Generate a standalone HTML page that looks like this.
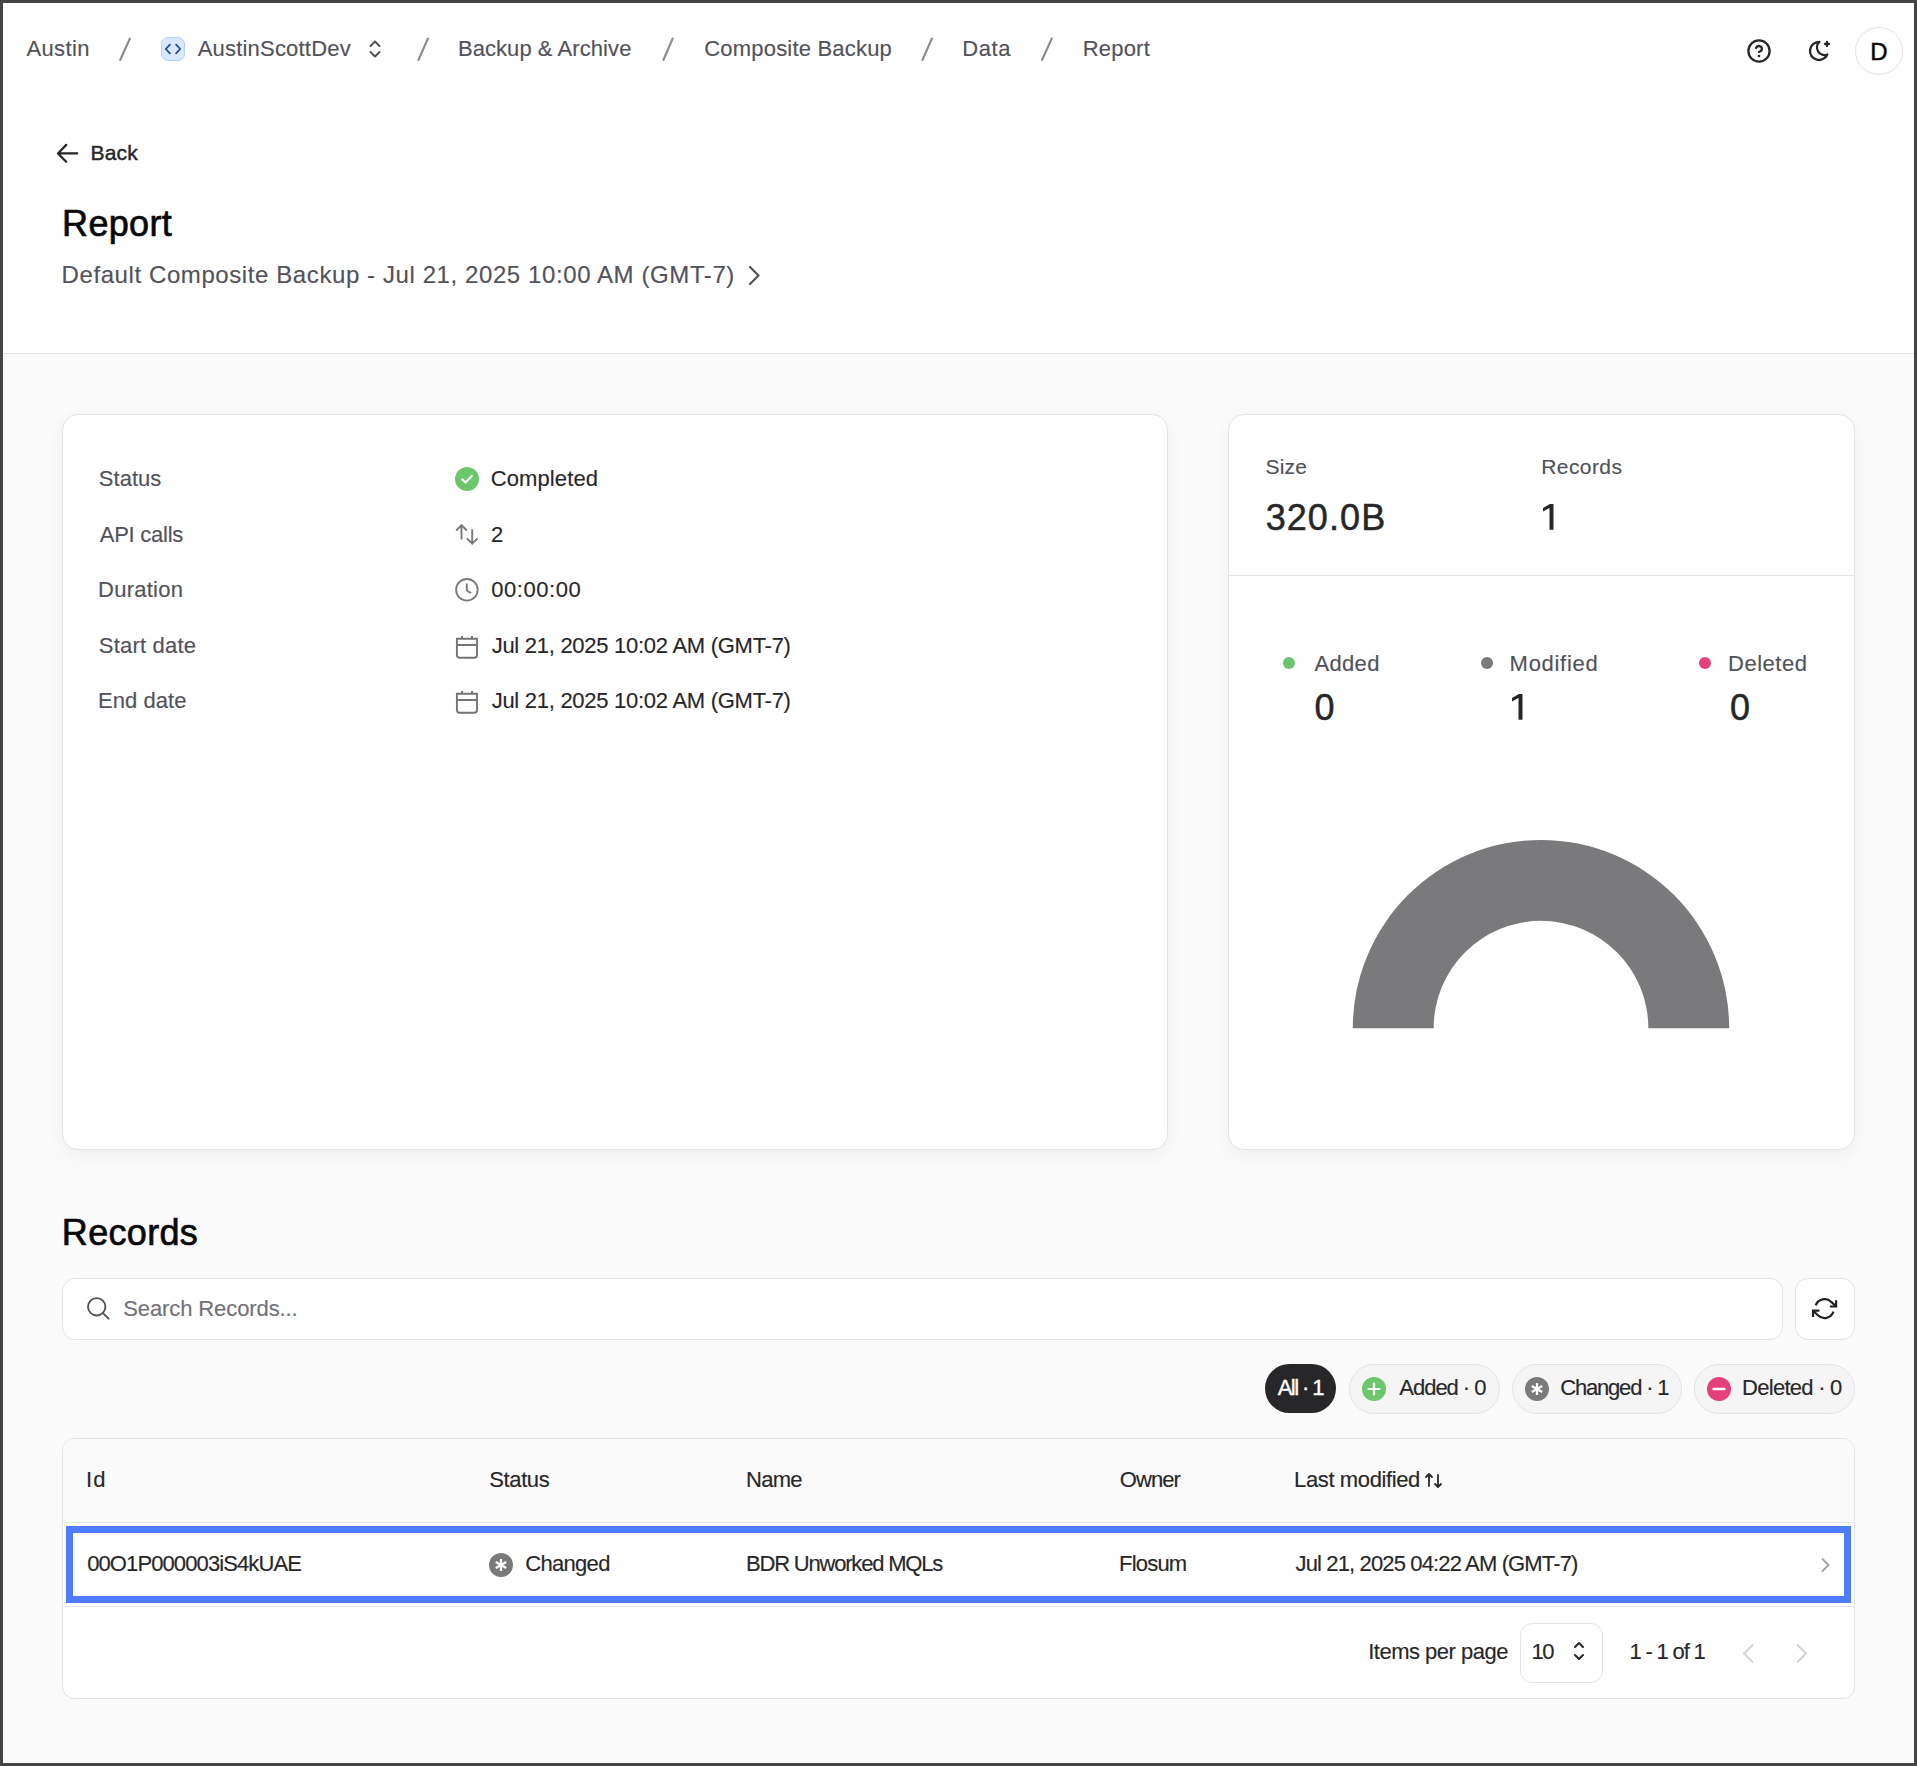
<!DOCTYPE html>
<html><head><meta charset="utf-8">
<style>
*{box-sizing:border-box;margin:0;padding:0}
html,body{width:1917px;height:1766px;overflow:hidden}
body{font-family:"Liberation Sans",sans-serif;position:relative;background:#444}
#frame{position:absolute;left:3px;top:3px;width:1911px;height:1760px;background:#fafafa}
.t{position:absolute;white-space:nowrap;line-height:1;font-size:22px}
.card{position:absolute;background:#fff;border:1px solid #e4e4e7;border-radius:16px;box-shadow:0 6px 20px rgba(0,0,0,.045)}
svg{position:absolute;overflow:visible}
</style></head><body>
<div id="frame"></div>
<div style="position:absolute;left:1913px;top:3px;width:1px;height:1760px;background:#fff"></div>
<div style="position:absolute;left:3px;top:1762px;width:1911px;height:1px;background:#fff"></div>
<div style="position:absolute;left:3px;top:3px;width:1911px;height:351px;background:#fff;border-bottom:1px solid #e4e4e7"></div>
<div class="t" style="left:26.46px;top:38px;font-size:22px;color:#52525b;letter-spacing:0.365px;-webkit-text-stroke:0.15px #52525b;">Austin</div>
<svg style="left:0;top:0" width="1917" height="100"><line x1="120.2" y1="60" x2="129.9" y2="38.5" stroke="#8b8b8f" stroke-width="2.1" stroke-linecap="round"/></svg>
<div style="position:absolute;left:161px;top:37px;width:24px;height:24px;border-radius:7px;background:#d9e8ff;border:1px solid #b0d0ff"></div>
<svg style="left:161px;top:37px" width="24" height="24"><path d="M8.9 7.6 L4.8 12 L8.9 16.4 M15.1 7.6 L19.2 12 L15.1 16.4" fill="none" stroke="#1f4e9c" stroke-width="1.8" stroke-linecap="round" stroke-linejoin="round"/></svg>
<div class="t" style="left:197.66px;top:38px;font-size:22px;color:#52525b;letter-spacing:0.201px;-webkit-text-stroke:0.15px #52525b;">AustinScottDev</div>
<svg style="left:364px;top:37px" width="22" height="24"><path d="M6.5 9 L11 4.5 L15.5 9 M6.5 15 L11 19.5 L15.5 15" fill="none" stroke="#52525b" stroke-width="2" stroke-linecap="round" stroke-linejoin="round"/></svg>
<svg style="left:0;top:0" width="1917" height="100"><line x1="418.4" y1="60" x2="428" y2="38.5" stroke="#8b8b8f" stroke-width="2.1" stroke-linecap="round"/></svg>
<div class="t" style="left:457.90px;top:38px;font-size:22px;color:#52525b;letter-spacing:0.070px;-webkit-text-stroke:0.15px #52525b;">Backup &amp; Archive</div>
<svg style="left:0;top:0" width="1917" height="100"><line x1="663.4" y1="60" x2="672.7" y2="38.5" stroke="#8b8b8f" stroke-width="2.1" stroke-linecap="round"/></svg>
<div class="t" style="left:704.28px;top:38px;font-size:22px;color:#52525b;letter-spacing:0.193px;-webkit-text-stroke:0.15px #52525b;">Composite Backup</div>
<svg style="left:0;top:0" width="1917" height="100"><line x1="922.4" y1="60" x2="932" y2="38.5" stroke="#8b8b8f" stroke-width="2.1" stroke-linecap="round"/></svg>
<div class="t" style="left:962.20px;top:38px;font-size:22px;color:#52525b;letter-spacing:0.611px;-webkit-text-stroke:0.15px #52525b;">Data</div>
<svg style="left:0;top:0" width="1917" height="100"><line x1="1042" y1="60" x2="1051.8" y2="38.5" stroke="#8b8b8f" stroke-width="2.1" stroke-linecap="round"/></svg>
<div class="t" style="left:1082.70px;top:38px;font-size:22px;color:#52525b;letter-spacing:0.207px;-webkit-text-stroke:0.15px #52525b;">Report</div>
<svg style="left:1747px;top:39px" width="24" height="24" fill="none" stroke="#27272a" stroke-width="2.3" stroke-linecap="round" stroke-linejoin="round"><circle cx="12" cy="12" r="10.6"/><path d="M9.09 9a3 3 0 0 1 5.83 1c0 2-3 3-3 3"/><path d="M12 17h.01" stroke-width="2.6"/></svg>
<svg style="left:1806.6px;top:39.1px" width="24" height="24" fill="none" stroke="#27272a" stroke-width="2.3" stroke-linecap="round" stroke-linejoin="round"><path d="M12 3c.132 0 .263 0 .393 0a7.5 7.5 0 0 0 7.92 12.446a9 9 0 1 1 -8.313 -12.454z"/><path d="M20 3v4M18 5h4"/></svg>
<div style="position:absolute;left:1855px;top:27px;width:48px;height:48px;border-radius:50%;border:1px solid #e4e4e7;background:#fff"></div>
<div class="t" style="left:1870.33px;top:39.5px;font-size:24px;color:#09090b;-webkit-text-stroke:0.5px #09090b;">D</div>
<svg style="left:54px;top:141px" width="28" height="24"><path d="M23.2 12.45 H4.5 M12.2 3.9 L4 12.45 L12.2 20.8" fill="none" stroke="#27272a" stroke-width="2.3" stroke-linecap="round" stroke-linejoin="round"/></svg>
<div class="t" style="left:90.48px;top:142px;font-size:21px;color:#27272a;letter-spacing:0.169px;-webkit-text-stroke:0.45px #27272a;">Back</div>
<div class="t" style="left:62.05px;top:206px;font-size:36px;color:#09090b;letter-spacing:0.333px;-webkit-text-stroke:0.7px #09090b;">Report</div>
<div class="t" style="left:61.53px;top:263px;font-size:24px;color:#52525b;letter-spacing:0.591px;-webkit-text-stroke:0.15px #52525b;">Default Composite Backup - Jul 21, 2025 10:00 AM (GMT-7)</div>
<svg style="left:742px;top:263px" width="24" height="24"><path d="M8 4 L16.5 12.5 L8 21" fill="none" stroke="#52525b" stroke-width="2.2" stroke-linecap="round" stroke-linejoin="round"/></svg>
<div class="card" style="left:62px;top:414px;width:1106px;height:736px"></div>
<div class="card" style="left:1228px;top:414px;width:627px;height:736px"></div>
<div style="position:absolute;left:1229px;top:575px;width:625px;height:1px;background:#e4e4e7"></div>
<div class="t" style="left:98.80px;top:468px;font-size:22px;color:#52525b;letter-spacing:0.025px;-webkit-text-stroke:0.15px #52525b;">Status</div>
<div class="t" style="left:99.76px;top:524px;font-size:22px;color:#52525b;letter-spacing:-0.256px;-webkit-text-stroke:0.15px #52525b;">API calls</div>
<div class="t" style="left:98.00px;top:579px;font-size:22px;color:#52525b;letter-spacing:0.254px;-webkit-text-stroke:0.15px #52525b;">Duration</div>
<div class="t" style="left:98.80px;top:635px;font-size:22px;color:#52525b;letter-spacing:0.198px;-webkit-text-stroke:0.15px #52525b;">Start date</div>
<div class="t" style="left:98.00px;top:690px;font-size:22px;color:#52525b;letter-spacing:0.058px;-webkit-text-stroke:0.15px #52525b;">End date</div>
<svg style="left:455px;top:467px" width="24" height="24"><circle cx="12" cy="12" r="12" fill="#6cc76c"/><path d="M7.2 12.4 L10.5 15.4 L16.8 9" fill="none" stroke="#fff" stroke-width="2.2" stroke-linecap="round" stroke-linejoin="round"/></svg>
<div class="t" style="left:490.78px;top:468px;font-size:22px;color:#27272a;letter-spacing:0.106px;-webkit-text-stroke:0.15px #27272a;">Completed</div>
<svg style="left:454px;top:522px" width="26" height="26"><path d="M7.5 17.5 V3.2 M2.2 8.5 L7.5 3.2 L12.8 8.5 M18.2 7.3 V21.6 M12.9 16.3 L18.2 21.6 L23.5 16.3" fill="none" stroke="#7a7a7a" stroke-width="1.9"/></svg>
<div class="t" style="left:490.89px;top:524px;font-size:22px;color:#27272a;-webkit-text-stroke:0.15px #27272a;">2</div>
<svg style="left:453px;top:576px" width="28" height="28"><circle cx="13.9" cy="13.8" r="10.8" fill="none" stroke="#7a7a7a" stroke-width="1.9"/><path d="M13.8 8.3 V13.8 Q14.5 15.5 17.5 16.6" fill="none" stroke="#7a7a7a" stroke-width="1.9" stroke-linecap="round"/></svg>
<div class="t" style="left:491.14px;top:579px;font-size:22px;color:#27272a;letter-spacing:0.583px;-webkit-text-stroke:0.15px #27272a;">00:00:00</div>
<svg style="left:453px;top:633px" width="28" height="28"><path d="M3.9 5.8 H24 V22 a2.7 2.7 0 0 1 -2.7 2.7 H6.6 a2.7 2.7 0 0 1 -2.7 -2.7 Z M3.9 12 H24 M9 3 V5.8 M19 3 V5.8" fill="none" stroke="#747474" stroke-width="1.9"/></svg>
<div class="t" style="left:491.66px;top:635px;font-size:22px;color:#27272a;letter-spacing:-0.273px;-webkit-text-stroke:0.15px #27272a;">Jul 21, 2025 10:02 AM (GMT-7)</div>
<svg style="left:453px;top:688px" width="28" height="28"><path d="M3.9 5.8 H24 V22 a2.7 2.7 0 0 1 -2.7 2.7 H6.6 a2.7 2.7 0 0 1 -2.7 -2.7 Z M3.9 12 H24 M9 3 V5.8 M19 3 V5.8" fill="none" stroke="#747474" stroke-width="1.9"/></svg>
<div class="t" style="left:491.66px;top:690px;font-size:22px;color:#27272a;letter-spacing:-0.273px;-webkit-text-stroke:0.15px #27272a;">Jul 21, 2025 10:02 AM (GMT-7)</div>
<div class="t" style="left:1265.55px;top:456px;font-size:21px;color:#52525b;letter-spacing:0.178px;-webkit-text-stroke:0.15px #52525b;">Size</div>
<div class="t" style="left:1541.28px;top:456px;font-size:21px;color:#52525b;letter-spacing:0.414px;-webkit-text-stroke:0.15px #52525b;">Records</div>
<div class="t" style="left:1265.63px;top:500px;font-size:36px;color:#27272a;letter-spacing:1.094px;-webkit-text-stroke:0.5px #27272a;">320.0B</div>
<svg style="left:1543px;top:504.1px" width="11" height="26"><polygon points="6.9,0 10.5,0 10.5,25.7 6.5,25.7 6.5,4 0,7.5 0,4.1" fill="#27272a"/></svg>
<div style="position:absolute;left:1283px;top:657px;width:12px;height:12px;border-radius:50%;background:#6cc76c"></div>
<div class="t" style="left:1314.46px;top:653px;font-size:22px;color:#52525b;letter-spacing:0.336px;-webkit-text-stroke:0.15px #52525b;">Added</div>
<div class="t" style="left:1314.59px;top:690px;font-size:36px;color:#27272a;-webkit-text-stroke:0.5px #27272a;">0</div>
<div style="position:absolute;left:1481px;top:657px;width:12px;height:12px;border-radius:50%;background:#7a7a7c"></div>
<div class="t" style="left:1509.60px;top:653px;font-size:22px;color:#52525b;letter-spacing:0.710px;-webkit-text-stroke:0.15px #52525b;">Modified</div>
<svg style="left:1511.8px;top:694.2px" width="11" height="26"><polygon points="6.9,0 10.5,0 10.5,25.7 6.5,25.7 6.5,4 0,7.5 0,4.1" fill="#27272a"/></svg>
<div style="position:absolute;left:1699px;top:657px;width:12px;height:12px;border-radius:50%;background:#e5407a"></div>
<div class="t" style="left:1728.00px;top:653px;font-size:22px;color:#52525b;letter-spacing:0.532px;-webkit-text-stroke:0.15px #52525b;">Deleted</div>
<div class="t" style="left:1729.89px;top:690px;font-size:36px;color:#27272a;-webkit-text-stroke:0.5px #27272a;">0</div>
<svg style="left:1350px;top:838px" width="382" height="192"><path d="M2.8 190.2 A188.2 188.2 0 0 1 379.2 190.2 L298.35 190.2 A107.35 107.35 0 0 0 83.65 190.2 Z" fill="#7a7a7c"/></svg>
<div class="t" style="left:61.85px;top:1215px;font-size:36px;color:#09090b;letter-spacing:0.317px;-webkit-text-stroke:0.7px #09090b;">Records</div>
<div style="position:absolute;left:62px;top:1278px;width:1721px;height:62px;background:#fff;border:1px solid #e4e4e7;border-radius:13px"></div>
<svg style="left:84px;top:1295px" width="28" height="28"><circle cx="12.7" cy="11.8" r="8.7" fill="none" stroke="#52525b" stroke-width="1.9"/><path d="M19.2 18.3 L24.6 23.7" stroke="#52525b" stroke-width="1.9" stroke-linecap="round"/></svg>
<div class="t" style="left:123.20px;top:1298px;font-size:22px;color:#71717a;letter-spacing:-0.098px;-webkit-text-stroke:0.15px #71717a;">Search Records...</div>
<div style="position:absolute;left:1795px;top:1278px;width:60px;height:62px;background:#fff;border:1px solid #e4e4e7;border-radius:13px"></div>
<svg style="left:1812.4px;top:1296.2px" width="25.2" height="25.2" viewBox="0 0 24 24" fill="none" stroke="#222225" stroke-width="2.1" stroke-linecap="butt" stroke-linejoin="miter"><polyline points="23 4 23 10 17 10"/><polyline points="1 20 1 14 7 14"/><path d="M3.51 9a9 9 0 0 1 14.85-3.36L23 10M1 14l4.64 4.36A9 9 0 0 0 20.49 15"/></svg>
<div style="position:absolute;left:1265px;top:1364px;width:71px;height:49px;border-radius:25px;background:#27272a"></div>
<div class="t" style="left:1277.76px;top:1377px;font-size:22px;color:#fff;letter-spacing:-1.570px;-webkit-text-stroke:0.4px #fff;">All · 1</div>
<div style="position:absolute;left:1349px;top:1364px;width:151px;height:50px;border-radius:25px;background:#f5f5f5;border:1px solid #e4e4e7"></div>
<svg style="left:1362px;top:1377px" width="24" height="24"><circle cx="12" cy="12" r="12" fill="#6cc76c"/><path d="M12 6.5 V17.5 M6.5 12 H17.5" stroke="#fff" stroke-width="2.2" stroke-linecap="round"/></svg>
<div class="t" style="left:1399.36px;top:1377px;font-size:22px;color:#27272a;letter-spacing:-1.037px;-webkit-text-stroke:0.15px #27272a;">Added · 0</div>
<div style="position:absolute;left:1512px;top:1364px;width:170px;height:50px;border-radius:25px;background:#f5f5f5;border:1px solid #e4e4e7"></div>
<svg style="left:1525px;top:1377px" width="24" height="24"><circle cx="12" cy="12" r="12" fill="#7a7a7c"/><path d="M12 6 V18 M6.8 9 L17.2 15 M6.8 15 L17.2 9" stroke="#fff" stroke-width="2.2"/></svg>
<div class="t" style="left:1560.18px;top:1377px;font-size:22px;color:#27272a;letter-spacing:-1.179px;-webkit-text-stroke:0.15px #27272a;">Changed · 1</div>
<div style="position:absolute;left:1694px;top:1364px;width:161px;height:50px;border-radius:25px;background:#f5f5f5;border:1px solid #e4e4e7"></div>
<svg style="left:1707px;top:1377px" width="24" height="24"><circle cx="12" cy="12" r="12" fill="#e5407a"/><path d="M6.5 12 H17.5" stroke="#fff" stroke-width="2.4" stroke-linecap="round"/></svg>
<div class="t" style="left:1742.10px;top:1377px;font-size:22px;color:#27272a;letter-spacing:-0.735px;-webkit-text-stroke:0.15px #27272a;">Deleted · 0</div>
<div class="card" style="left:62px;top:1438px;width:1793px;height:261px;border-radius:12px;overflow:hidden;box-shadow:none"><div style="position:absolute;left:0;top:0;width:100%;height:84px;background:#fafafa;border-bottom:1px solid #e4e4e7"></div><div style="position:absolute;left:0;top:167px;width:100%;height:1px;background:#e4e4e7"></div></div>
<div class="t" style="left:85.97px;top:1469px;font-size:22px;color:#27272a;letter-spacing:1.101px;-webkit-text-stroke:0.15px #27272a;">Id</div>
<div class="t" style="left:489.30px;top:1469px;font-size:22px;color:#27272a;letter-spacing:-0.395px;-webkit-text-stroke:0.15px #27272a;">Status</div>
<div class="t" style="left:746.10px;top:1469px;font-size:22px;color:#27272a;letter-spacing:-0.734px;-webkit-text-stroke:0.15px #27272a;">Name</div>
<div class="t" style="left:1119.86px;top:1469px;font-size:22px;color:#27272a;letter-spacing:-0.972px;-webkit-text-stroke:0.15px #27272a;">Owner</div>
<div class="t" style="left:1294.10px;top:1469px;font-size:22px;color:#27272a;letter-spacing:-0.386px;-webkit-text-stroke:0.15px #27272a;">Last modified</div>
<svg style="left:1424px;top:1471px" width="20" height="20"><path d="M5 15 V3 M2 6 L5 3 L8 6 M14 4 V16 M11 13 L14 16 L17 13" fill="none" stroke="#27272a" stroke-width="1.8" stroke-linecap="round" stroke-linejoin="round"/></svg>
<div style="position:absolute;left:66px;top:1526px;width:1785px;height:77px;border:7px solid #4d7cfe;background:#fff"></div>
<div class="t" style="left:87.14px;top:1553px;font-size:22px;color:#27272a;letter-spacing:-0.890px;-webkit-text-stroke:0.15px #27272a;">00O1P000003iS4kUAE</div>
<svg style="left:489px;top:1553px" width="24" height="24"><circle cx="12" cy="12" r="12" fill="#7a7a7c"/><path d="M12 6 V18 M6.8 9 L17.2 15 M6.8 15 L17.2 9" stroke="#fff" stroke-width="2.2"/></svg>
<div class="t" style="left:525.18px;top:1553px;font-size:22px;color:#27272a;letter-spacing:-0.677px;-webkit-text-stroke:0.15px #27272a;">Changed</div>
<div class="t" style="left:746.10px;top:1553px;font-size:22px;color:#27272a;letter-spacing:-1.206px;-webkit-text-stroke:0.15px #27272a;">BDR Unworked MQLs</div>
<div class="t" style="left:1119.10px;top:1553px;font-size:22px;color:#27272a;letter-spacing:-0.814px;-webkit-text-stroke:0.15px #27272a;">Flosum</div>
<div class="t" style="left:1295.56px;top:1553px;font-size:22px;color:#27272a;letter-spacing:-0.862px;-webkit-text-stroke:0.15px #27272a;">Jul 21, 2025 04:22 AM (GMT-7)</div>
<svg style="left:1818px;top:1555px" width="16" height="20"><path d="M4.5 4 L10.5 10 L4.5 16" fill="none" stroke="#a1a1aa" stroke-width="1.8" stroke-linecap="round" stroke-linejoin="round"/></svg>
<div class="t" style="left:1368.27px;top:1641px;font-size:22px;color:#27272a;letter-spacing:-0.511px;-webkit-text-stroke:0.15px #27272a;">Items per page</div>
<div style="position:absolute;left:1520px;top:1623px;width:83px;height:60px;border:1px solid #e4e4e7;border-radius:12px;background:#fff"></div>
<div class="t" style="left:1531.42px;top:1641px;font-size:22px;color:#27272a;letter-spacing:-1.336px;-webkit-text-stroke:0.15px #27272a;">10</div>
<svg style="left:1568px;top:1640px" width="22" height="24"><path d="M7 7 L11 3 L15 7 M7 15 L11 19 L15 15" fill="none" stroke="#27272a" stroke-width="2" stroke-linecap="round" stroke-linejoin="round"/></svg>
<div class="t" style="left:1629.42px;top:1641px;font-size:22px;color:#27272a;letter-spacing:-1.153px;-webkit-text-stroke:0.15px #27272a;">1 - 1 of 1</div>
<svg style="left:1738px;top:1641px" width="20" height="24"><path d="M14.5 4 L6 12.5 L14.5 21" fill="none" stroke="#d4d4d8" stroke-width="2" stroke-linecap="round" stroke-linejoin="round"/></svg>
<svg style="left:1792px;top:1641px" width="20" height="24"><path d="M5.5 4 L14 12.5 L5.5 21" fill="none" stroke="#d4d4d8" stroke-width="2" stroke-linecap="round" stroke-linejoin="round"/></svg>
</body></html>
